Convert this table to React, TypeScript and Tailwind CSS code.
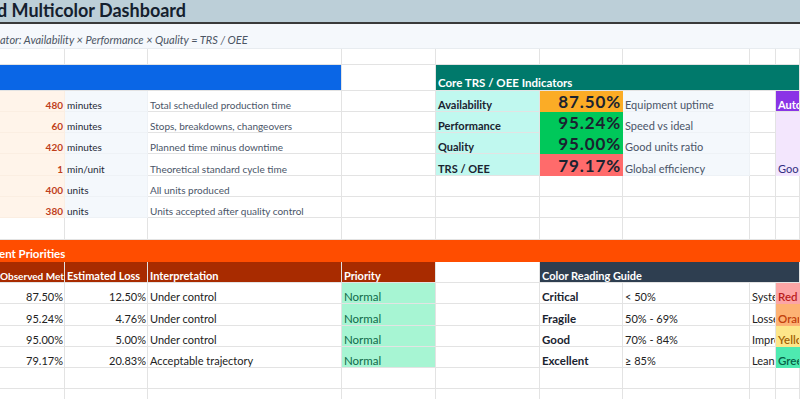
import React from "react";

const cols = "grid grid-cols-[65px_83px_194px_94px_104px_83px_127px_26px_24px]";

interface CellProps {
  span?: string;
  className?: string;
  right?: boolean;
  children?: React.ReactNode;
}

function Cell({ span = "", className = "", right, children }: CellProps) {
  return (
    <div
      className={`${span} flex items-end overflow-hidden whitespace-nowrap leading-none border-r border-b border-[#e3e3e3] pb-[1px] ${
        right ? "justify-end pr-[1px]" : "pl-[2px]"
      } ${className}`}
    >
      {children}
    </div>
  );
}

function Empty({ n }: { n: number }) {
  return (
    <>
      {Array.from({ length: n }).map((_, i) => (
        <Cell key={i} />
      ))}
    </>
  );
}

const inputs = [
  ["480", "minutes", "Total scheduled production time", "h-[21px]"],
  ["60", "minutes", "Stops, breakdowns, changeovers", "h-[21px]"],
  ["420", "minutes", "Planned time minus downtime", "h-[21px]"],
  ["1", "min/unit", "Theoretical standard cycle time", "h-[22px]"],
  ["400", "units", "All units produced", "h-[21px]"],
  ["380", "units", "Units accepted after quality control", "h-[21px]"],
];

const core = [
  ["Availability", "87.50%", "Equipment uptime", "bg-[#fbac26]"],
  ["Performance", "95.24%", "Speed vs ideal", "bg-[#00c85a]"],
  ["Quality", "95.00%", "Good units ratio", "bg-[#00c85a]"],
  ["TRS / OEE", "79.17%", "Global efficiency", "bg-[#ff6b6b]"],
];

const priorities = [
  ["87.50%", "12.50%", "Under control", "Critical", "< 50%", "Syste", "Red", "bg-[#fca5a5] text-[#b91c1c]", "h-[21px]"],
  ["95.24%", "4.76%", "Under control", "Fragile", "50% - 69%", "Losse", "Oran", "bg-[#fdb274] text-[#c2410c]", "h-[22px]"],
  ["95.00%", "5.00%", "Under control", "Good", "70% - 84%", "Impro", "Yello", "bg-[#fde68a] text-[#a16207]", "h-[21px]"],
  ["79.17%", "20.83%", "Acceptable trajectory", "Excellent", "≥ 85%", "Lean", "Gree", "bg-[#4eeab0] text-[#065f46]", "h-[21px]"],
];

export default function App() {
  return (
    <div
      className="w-[800px] h-[399px] overflow-hidden bg-white text-[11px] text-[#1f2937]"
      style={{ fontFamily: "Lato, 'Noto Sans', sans-serif" }}
    >
      {/* Title */}
      <div className="h-[24px] bg-[#bccfd8] border-b-2 border-[#3a3a3a] flex items-end pb-[3px]">
        <span className="ml-[-3px] text-[18px] font-bold leading-none text-[#14202e]">d Multicolor Dashboard</span>
      </div>
      <div className="h-[25px] bg-[#f5f8fc] border-b border-[#e8ecf0] flex items-end pb-[3px]">
        <span className="italic text-[11px] leading-none text-[#4b5563]">
          ator: Availability × Performance × Quality = TRS / OEE
        </span>
      </div>

      {/* Blank row */}
      <div className={`${cols} h-[16px]`}>
        <Empty n={9} />
      </div>

      {/* Section headers */}
      <div className={`${cols} h-[26px]`}>
        <Cell span="col-span-3" className="bg-[#0a66e6] border-[#0a66e6]" />
        <Cell />
        <Cell span="col-span-5" className="bg-[#00796b] border-[#00796b] text-white font-bold text-[11.5px] pb-[2px]">
          Core TRS / OEE Indicators
        </Cell>
      </div>

      {/* Inputs + core indicators */}
      {inputs.map(([v, unit, desc, h], i) => {
        const c = core[i];
        return (
          <div key={i} className={`${cols} ${h}`}>
            <Cell right className="bg-[#fff4ea] border-[#fbeee2] text-[#c0401a] font-bold text-[10px]">
              {v}
            </Cell>
            <Cell className="bg-[#f4f8fc] border-[#eef2f6] pl-[1px] text-[10px]">{unit}</Cell>
            <Cell className="text-[#4a5568] text-[10px]">{desc}</Cell>
            <Cell />
            {c ? (
              <>
                <Cell className="bg-[#c0f8ef] border-[#d6fbf5] font-bold text-[#1a2330]">{c[0]}</Cell>
                <Cell
                  right
                  className={`${c[3]} border-transparent font-bold text-[17px] tracking-[0.9px] text-[#1a2330] pb-0`}
                >
                  {c[1]}
                </Cell>
                <Cell className="bg-[#f4f8fc] border-[#eef2f6] text-[#4a5568]">{c[2]}</Cell>
                <Cell />
                {i === 0 ? (
                  <Cell className="bg-[#8a34e6] border-[#8a34e6] text-white font-bold">Auto</Cell>
                ) : (
                  <Cell className="bg-[#f3e6fd] border-[#f3e6fd] text-[#312e81]">{i === 3 ? "Good" : ""}</Cell>
                )}
              </>
            ) : (
              <Empty n={5} />
            )}
          </div>
        );
      })}

      {/* Blank row */}
      <div className={`${cols} h-[22px]`}>
        <Empty n={9} />
      </div>

      {/* Priorities bar */}
      <div className="h-[22px] bg-[#ff4d00] flex items-end pb-[3px]">
        <span className="ml-[-1px] text-white font-bold text-[11.5px] leading-none">ent Priorities</span>
      </div>

      {/* Header row */}
      <div className={`${cols} h-[21px]`}>
        <Cell className="bg-[#a82b00] border-[#c05a3a] text-white font-bold pl-0 text-[10px]">
          <span className="ml-[-2px]">Observed Metric</span>
        </Cell>
        <Cell className="bg-[#a82b00] border-[#c05a3a] text-white font-bold pl-[1px]">Estimated Loss</Cell>
        <Cell className="bg-[#a82b00] border-[#c05a3a] text-white font-bold">Interpretation</Cell>
        <Cell className="bg-[#a82b00] border-[#c05a3a] text-white font-bold">Priority</Cell>
        <Cell />
        <Cell span="col-span-4" className="bg-[#2e3e50] border-[#2e3e50] text-white font-bold">
          Color Reading Guide
        </Cell>
      </div>

      {priorities.map((p, i) => (
        <div key={i} className={`${cols} ${p[8]}`}>
          <Cell right className="text-[#222]">{p[0]}</Cell>
          <Cell right className="text-[#222]">{p[1]}</Cell>
          <Cell className="text-[#222]">{p[2]}</Cell>
          <Cell className="bg-[#a7f5d3] border-[#bdf7de] text-[11.5px] text-[#0f6b4a]">Normal</Cell>
          <Cell />
          <Cell className="font-bold text-[11.5px] text-[#1a2330]">{p[3]}</Cell>
          <Cell className="text-[#222]">{p[4]}</Cell>
          <Cell className="text-[#222] pl-[1px]">{p[5]}</Cell>
          <Cell className={`${p[7]} border-transparent text-[11.5px] font-semibold pl-[1px]`}>{p[6]}</Cell>
        </div>
      ))}

      <div className={`${cols} h-[21px]`}>
        <Empty n={9} />
      </div>
      <div className={`${cols} h-[21px]`}>
        <Empty n={9} />
      </div>
    </div>
  );
}
